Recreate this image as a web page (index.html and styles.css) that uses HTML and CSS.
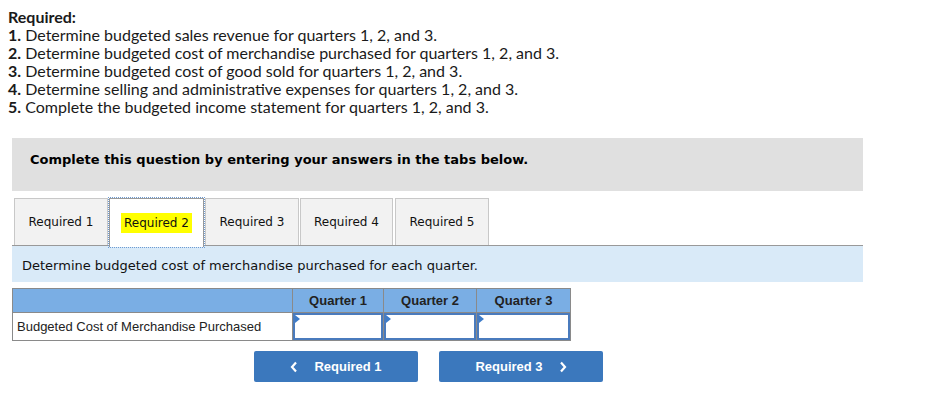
FILE: index.html
```html
<!DOCTYPE html>
<html>
<head>
<meta charset="utf-8">
<link rel="stylesheet" href="styles.css">
</head>
<body>
<div class="req">
  <div class="req-title">Required:</div>
  <div><b>1.</b> Determine budgeted sales revenue for quarters 1, 2, and 3.</div>
  <div><b>2.</b> Determine budgeted cost of merchandise purchased for quarters 1, 2, and 3.</div>
  <div><b>3.</b> Determine budgeted cost of good sold for quarters 1, 2, and 3.</div>
  <div><b>4.</b> Determine selling and administrative expenses for quarters 1, 2, and 3.</div>
  <div><b>5.</b> Complete the budgeted income statement for quarters 1, 2, and 3.</div>
</div>

<div class="panel">
  <div class="notice">Complete this question by entering your answers in the tabs below.</div>

  <div class="tabs">
    <div class="tab t1">Required 1</div>
    <div class="tab active t2"><span class="hl">Required 2</span></div>
    <div class="tab t3">Required 3</div>
    <div class="tab t4">Required 4</div>
    <div class="tab t5">Required 5</div>
  </div>

  <div class="instr">Determine budgeted cost of merchandise purchased for each quarter.</div>

  <table class="grid">
    <tr class="head">
      <th class="c-label"></th>
      <th class="c-q1">Quarter 1</th>
      <th class="c-q2">Quarter 2</th>
      <th class="c-q3">Quarter 3</th>
    </tr>
    <tr class="row">
      <td class="label">Budgeted Cost of Merchandise Purchased</td>
      <td class="inp"><div class="box"></div></td>
      <td class="inp"><div class="box"></div></td>
      <td class="inp"><div class="box"></div></td>
    </tr>
  </table>

  <div class="nav">
    <div class="btn prev">
      <svg width="8" height="12" viewBox="0 0 8 12"><path d="M6 1.5 L2 6 L6 10.5" fill="none" stroke="#fff" stroke-width="2.2"/></svg>
      <span>Required 1</span>
    </div>
    <div class="btn next">
      <span>Required 3</span>
      <svg width="8" height="12" viewBox="0 0 8 12"><path d="M2 1.5 L6 6 L2 10.5" fill="none" stroke="#fff" stroke-width="2.2"/></svg>
    </div>
  </div>
</div>
</body>
</html>
```

FILE: styles.css
```css
html, body {
  margin: 0;
  padding: 0;
  background: #fff;
}
body {
  padding-top: 8px;
}
.req {
  margin-left: 8px;
  font-family: "Lato", "Open Sans", sans-serif;
  font-size: 16px;
  line-height: 18px;
  color: #1a1a1a;
}
.req-title, .req b {
  font-weight: 700;
}
.panel {
  margin-left: 12px;
  width: 851px;
  margin-top: 22px;
}
.notice {
  background: #e0e0e0;
  height: 53px;
  box-sizing: border-box;
  padding: 14px 0 0 18px;
  font-family: "DejaVu Sans", Verdana, sans-serif;
  font-weight: bold;
  font-size: 13px;
  line-height: 16px;
  color: #000;
}
.tabs {
  margin-top: 7px;
  display: flex;
  padding-left: 2px;
  border-bottom: 1px solid #999;
  height: 47px;
}
.tab {
  box-sizing: border-box;
  height: 47px;
  background: #f2f2f2;
  border: 1px solid #c8c8c8;
  border-bottom: none;
  display: flex;
  align-items: center;
  justify-content: center;
  font-family: "DejaVu Sans", Verdana, sans-serif;
  font-size: 12px;
  color: #111;
}
.t1 { width: 94px; }
.t2 { width: 95px; margin-left: 1px; }
.t3 { width: 94px; margin-left: 1px; }
.t4 { width: 93px; margin-left: 1px; }
.t5 { width: 94px; margin-left: 2px; }
.tab.active {
  background: #fff;
  border: 1px solid #999;
  border-bottom: none;
  height: 49px;
  outline: 1px dotted #6d9bd3;
  position: relative;
  z-index: 1;
}
.hl {
  background: #ffff00;
  padding: 3px 3px;
}
.instr {
  background: #d9eaf8;
  height: 36px;
  box-sizing: border-box;
  padding: 12px 0 0 10px;
  font-family: "DejaVu Sans", Verdana, sans-serif;
  font-size: 13px;
  line-height: 16px;
  color: #111;
}
.grid {
  margin-top: 6px;
  border-collapse: collapse;
  font-family: "Liberation Sans", Arial, sans-serif;
  font-size: 13px;
}
.grid th, .grid td {
  border: 1px solid #8a8a8a;
  padding: 0;
}
.head th {
  background: #7aaee4;
  height: 23px;
  font-weight: bold;
  color: #222;
  text-align: center;
}
.c-label { width: 279px; }
.c-q1 { width: 90px; }
.c-q2 { width: 92px; }
.c-q3 { width: 93px; }
.row td {
  height: 27px;
}
.label {
  padding-left: 4px !important;
  color: #222;
  text-align: left;
}
.inp {
  position: relative;
}
.box {
  position: absolute;
  left: 0;
  top: 0;
  right: 0;
  bottom: 0;
  border: 2px solid #4a7bbd;
  background: #fff;
}
.box::before {
  content: "";
  position: absolute;
  left: 0;
  top: 0;
  border-left: 5px solid #3d7cc9;
  border-top: 4px solid transparent;
  border-bottom: 4px solid transparent;
}
.nav {
  display: flex;
  margin-top: 10px;
  margin-left: 242px;
  gap: 21px;
}
.btn {
  width: 164px;
  height: 31px;
  background: #3b78bd;
  border-radius: 2px;
  display: flex;
  align-items: center;
  justify-content: center;
  gap: 16px;
  color: #fff;
  font-family: "Liberation Sans", Arial, sans-serif;
  font-weight: bold;
  font-size: 13px;
}
.btn svg { display: block; }
```
